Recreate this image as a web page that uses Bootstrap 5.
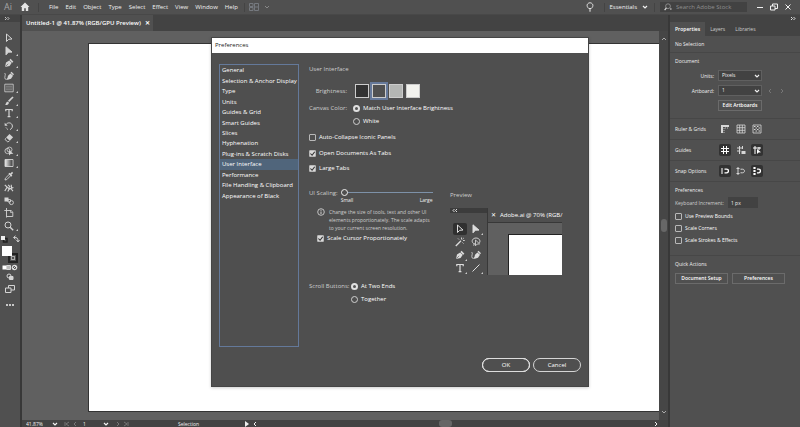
<!DOCTYPE html>
<html lang="en">
<head>
<meta charset="utf-8">
<meta name="viewport" content="width=device-width, initial-scale=1">
<title>Illustrator preferences</title>
<link href="https://cdn.jsdelivr.net/npm/bootstrap@5.3.0/dist/css/bootstrap.min.css" rel="stylesheet">
<style>
:root{--panel:#505050;--dark:#434343;--field:#424242;--canvas:#606060;--line:#474747;--edge:#383838}
body{font:6px/10px "Open Sans","Noto Sans",sans-serif;color:#f0f0f0;background:var(--panel)}
svg{display:block;fill:none;stroke:currentColor;flex:none}
a{color:inherit;text-decoration:none}
button,input,select{font:inherit;color:inherit;line-height:10px}
button{background:none;border:0;padding:0}
.dim{color:#cecece}
.i8{width:8px;height:8px}.i10{width:10px;height:10px}
.m1{margin-top:1px}.m2{margin-top:2px}.m3{margin-top:3px}.m5{margin-top:5px}.m6{margin-top:6px}.m10{margin-top:10px}.m15{margin-top:15px}
.topbar{height:15px;border-bottom:1px solid #484848}
.vline{width:1px;height:9px;background:#444}
.ai{font-size:9px;color:#a5a5a5}
.menus{gap:7px;margin:0 6px 0 10px}
.util{gap:5px}
.winbtns{gap:6px}
.stock{width:87px;height:10px;background:var(--field);color:#999}
.stock input{background:none;border:0;outline:0;padding:0;min-width:0}
.stock input::placeholder{color:#8f8f8f;opacity:1}
.tools{width:22px;border-right:2px solid var(--edge);color:#d4d4d4}
.strip{height:7px;background:var(--dark)}
.toolgrid{height:200px;margin-top:10px;display:grid;grid-auto-rows:1fr;justify-items:center;align-items:center}
.toolgrid button{position:relative;width:16px}
.toolgrid svg{width:10px;height:10px;margin-left:2px}
.more::after{content:"";position:absolute;right:0;bottom:0;border-left:2px solid transparent;border-bottom:2px solid #ccc}
.chips{width:16px;height:17px}
.fillchip,.strokechip{position:absolute;width:10px;height:10px}
.fillchip{left:0;top:0;background:#fff}
.strokechip{right:0;bottom:0;border:2px solid #222;outline:1px solid #aaa;outline-offset:-4px}
.tabstrip{height:16px;background:var(--dark)}
.doctab{background:var(--panel);font-weight:600;color:#fff;padding:0 3px 0 4px}
.stage{background:var(--canvas);padding:12px 0 8px 66px}
.artboard{background:#fff;border:1px solid #333;border-right:0}
.vscroll{width:9px;background:#464646;color:#aaa}
.vthumb{width:6px;height:13px;border-radius:3px;background:#676767;margin-top:109px}
.status{height:7px;background:var(--dark);overflow:hidden;font-size:5px}
.sbfill{flex:180 0 0}.sbrest{flex:200 0 0}
.stext{margin:0 44px 0 48px}
.hthumb{width:13px;height:7px;border-radius:3px;background:#666}
.status select{background:transparent;border:0;padding:0;appearance:none}
.props{width:132px;border-left:2px solid var(--edge);font-size:5px}
.ptabs{height:14px;background:var(--dark)}
.ptabs a{padding:2px 5px}
.ptabs .on{background:var(--panel);font-weight:600;color:#fff}
.sec{padding:3px 4px 3px 5px;border-bottom:1px solid var(--line)}
.sec.low{padding-bottom:5px}
.sec.deep{padding-bottom:10px}
.lab{width:39px;text-align:right}
.field{background:var(--field);border:1px solid #606060;height:11px;padding:0 3px;line-height:9px}
.w44{width:44px}.w30{width:30px}.w53{width:53px}
.drop{position:relative}
.drop select{appearance:none;display:block;width:100%;border-radius:0}
.drop svg{position:absolute;right:1px;top:2px;width:8px;height:8px;pointer-events:none}
.pbtn{height:11px;border:1px solid #6b6b6b;color:#fff;line-height:9px;white-space:nowrap;font-weight:600}
.prow{min-height:15px}
.irow{height:21px;border-bottom:1px solid var(--line);padding:0 5px}
.irow span{width:40px;white-space:nowrap}
.irow button{width:12px;height:12px;border-radius:2px;display:grid;place-items:center;color:#d6d6d6}
.irow .on{background:#323232;color:#fff}
.irow svg{width:10px;height:10px}
.tick{appearance:none;width:7px;height:7px;border:1px solid #b8b8b8;border-radius:1px;margin:0;flex:none}
.tick:checked{background:#d9d9d9 url("data:image/svg+xml,%3Csvg xmlns='http://www.w3.org/2000/svg' viewBox='0 0 7 7'%3E%3Cpath d='M1 3.5l2 2 3-4' fill='none' stroke='%23333' stroke-width='1.2'/%3E%3C/svg%3E") center/6px}
.dot{appearance:none;width:7px;height:7px;border:1px solid #d0d0d0;border-radius:50%;margin:0;flex:none}
.dot:checked{border:2px solid #e0e0e0;background:#555}
.dlg{width:378px;top:37px;height:350px;background:#4f4f4f;border:1px solid #454545;box-shadow:0 1px 3px #0003}
.dlgtitle{height:15px;line-height:15px;background:#fff;color:#222;padding-left:3px}
.dlgbody{padding:11px 7px 0;gap:10px}
.cats{width:80px;height:283px;border:1px solid #64799a}
.catgrid{display:grid;grid-auto-rows:1fr;height:136px}
.catgrid a{padding-left:2px;color:#fff;white-space:nowrap;display:flex;align-items:center}
.catgrid .on{background:#50657b}
.opt{color:#fff;gap:3px;height:10px;white-space:nowrap}
.lab2{width:38px;text-align:right;white-space:nowrap}
.swatch{width:14px;height:14px;border:1px solid #ccc}
.swatch.sel{outline:2px solid #66799a}
.s1{background:#323232}.s2{background:#505050}.s3{background:#b4b6b4}.s4{background:#f2f2ee}
.bgap{gap:3px}
.cgap{gap:6px}
.slide{appearance:none;display:block;width:92px;height:8px;margin:0;background:linear-gradient(#7d91a8,#7d91a8) center/100% 1px no-repeat}
.slide::-webkit-slider-thumb{appearance:none;width:7px;height:7px;border:1px solid #eee;border-radius:50%;background:#4f4f4f}
.slabel{padding-right:3px}
.tiny{font-size:5px;line-height:8px}
.scalecol{width:141px}
.pv{width:111px;height:67px;margin-top:8px}
.pvtools{width:38px;background:#4f4f4f;border-right:1px solid #383838}
.pvbar{height:5px;background:#3c3c3c;padding-left:2px}
.pvgrid{display:grid;grid-template-columns:16px 16px;grid-auto-rows:13px;padding:9px 2px 0;place-items:center;color:#ddd}
.pvgrid .on{background:#303030;border-radius:2px}
.pvgrid span{width:14px;height:12px;display:grid;place-items:center;position:relative}
.pvtab{height:15px;white-space:nowrap;border-bottom:1px solid #383838;padding-left:3px;gap:4px;color:#fff}
.pvcanvas{background:var(--canvas);padding:11px 0 0 20px}
.pvpage{background:#fff;border:1px solid #222;border-width:1px 0 0 1px}
.pill{width:48px;height:14px;border:1px solid #d5d5d5;border-radius:7px;line-height:12px;color:#fff}
.pill.main{outline:1px solid #ddd;outline-offset:-1px;border-color:#fff}
.dlgfoot{gap:3px;padding:0 7px 14px}
</style>
<script src="https://cdn.jsdelivr.net/npm/bootstrap@5.3.0/dist/js/bootstrap.bundle.min.js"></script>
</head>
<body class="vh-100 d-flex flex-column overflow-hidden">
<svg width="0" height="0" class="position-absolute" aria-hidden="true">
<symbol id="sel" viewBox="0 0 10 10"><path d="M2.5 1v7.5l2.2-2.2 3.3-.3z"/></symbol>
<symbol id="dir" viewBox="0 0 10 10"><path d="M2 .8v8l2.4-2.6 3.6-.1z" fill="currentColor"/></symbol>
<symbol id="pen" viewBox="0 0 10 10"><path d="M1 9l1-4.6 3.2-2 2.5 2.4-2.1 3.3z" fill="currentColor" stroke="none"/><path d="M6 1.400l2.800 2.800" stroke-width="1.600"/><path d="M1.400 8.600l2.800-2.800" stroke="#505050" stroke-width=".6"/></symbol>
<symbol id="curv" viewBox="0 0 10 10"><path d="M3 9l1-4.200 2.400-2.300 2.600 2.200-2 3z" fill="currentColor" stroke="none"/><path d="M7 1.200l2.500 2.600" stroke-width="1.400"/><path d="M.6 2c2 1-.8 4 .6 6 1 1 2 .2 2.600-1" stroke-width=".8"/></symbol>
<symbol id="rect" viewBox="0 0 10 10"><path d="M.8 1.200h8.400v7.600H.8z" stroke-width=".8"/><path d="M2.500 3.200h5M2.500 5h5M2.500 6.800h5" stroke-dasharray="1 1" stroke-width=".9"/></symbol>
<symbol id="brush" viewBox="0 0 10 10"><path d="M9 1L4.600 5.400" stroke-width="1.700"/><path d="M1 9c1-.3.600-2.200 2-3.200 1.400-.4 2.300.7 1.600 2C4 9 2.500 9.300 1 9z" fill="currentColor" stroke="none"/></symbol>
<symbol id="type" viewBox="0 0 10 10"><path d="M1.800 3.200V1.500h6.400v1.700M5 1.500v7M3.600 8.700h2.800" stroke-width="1.200"/></symbol>
<symbol id="rot" viewBox="0 0 10 10"><path d="M2 3.600C3.400 1 8 1.200 8.400 5c0 1.800-1 3-2.400 3.600"/><path d="M.7 1.800v3h3z" fill="currentColor" stroke="none"/><path d="M2 6.500c.5 1.200 1.500 2 2.700 2.200" stroke-dasharray="1 .8"/></symbol>
<symbol id="erase" viewBox="0 0 10 10"><path d="M5.500 1l3.600 3.200-3.300 3.600-3.700-3.200z" fill="currentColor" stroke="none"/><path d="M1.800 5.200L1 6.500l2.800 2.400 1.500-.8" stroke-width=".9"/></symbol>
<symbol id="shape" viewBox="0 0 10 10"><circle cx="3.500" cy="5" r="2.600" stroke-width=".8"/><circle cx="5.500" cy="3.600" r="2.500" stroke-width=".8"/><path d="M5 4v5.500l1.600-1.500 2.800-.3z" fill="currentColor" stroke="none"/></symbol>
<symbol id="grad" viewBox="0 0 10 10"><linearGradient id="lg"><stop stop-color="#eee"/><stop offset="1" stop-color="#333"/></linearGradient><path d="M1 1.500h8v7H1z" fill="url(#lg)" stroke-width=".9"/></symbol>
<symbol id="drop" viewBox="0 0 10 10"><path d="M1 9l.4-1.800L5.600 3l1.400 1.400-4.200 4.200z" stroke-width=".9"/><path d="M5 2.300l2.800 2.800M6.800 3.200L8.600 1.400" stroke-width="1.600"/></symbol>
<symbol id="puppet" viewBox="0 0 10 10"><path d="M.8 2l2.400 2L.8 8M3.200 4.200l2.400 1.600L9.400 4.500M4.200 1.800l2 2.400M5 6.200L3.800 8.600M6.800 5.500l2.200 2.700M7.200 1.800l.4 3" stroke-width="1.100"/><circle cx="5.400" cy="5.400" r="1" fill="currentColor" stroke="none"/></symbol>
<symbol id="blend" viewBox="0 0 10 10"><path d="M.5 1.500h4v4h-4z" fill="currentColor" stroke="none"/><path d="M4 3.500h2.500V6H4z" stroke-width=".8"/><circle cx="7.400" cy="6.600" r="2" stroke-width=".9"/></symbol>
<symbol id="board" viewBox="0 0 10 10"><path d="M2.500 0v9.500M.3 2.500H7l1.800 1.600v4.400H2.500" stroke-width=".9"/><path d="M6.500 2.500v2h2" stroke-width=".7"/></symbol>
<symbol id="zoom" viewBox="0 0 10 10"><circle cx="4" cy="4" r="3"/><path d="M6.200 6.200l3 3" stroke-width="1.400"/></symbol>
<symbol id="wand" viewBox="0 0 10 10"><path d="M.8 9L6 3.800" stroke-width="1.300"/><path d="M6.500.5v2M8 3.500h1.800M3 1.500l1 1M8.800 1L7.600 2.200M7.500 5.500l1 1" stroke-width=".9"/></symbol>
<symbol id="lasso" viewBox="0 0 10 10"><path d="M2.500 6.500C-.4 4 2 1 5 1s4.800 2.500 3.500 4.800M2.500 6.500c1.500-.5 2 .8.800 1.500L2 8" stroke-width=".9"/><path d="M4.500 3v5.800l1.600-1.700 2.500-.2z" stroke-width=".8"/></symbol>
<symbol id="lineic" viewBox="0 0 10 10"><path d="M1.500 8.500l7-7"/></symbol>
<symbol id="chev" viewBox="0 0 8 8"><path d="M2 3l2 2 2-2" stroke-width="1.200"/></symbol>
<symbol id="dchev" viewBox="0 0 6 5"><path d="M1 1l1.500 1.500L1 4M3.500 1L5 2.500 3.500 4" stroke-width=".9"/></symbol>
<symbol id="dchevl" viewBox="0 0 6 5"><path d="M2.500 1L1 2.500 2.500 4M5 1L3.500 2.500 5 4" stroke-width=".9"/></symbol>
</svg>

<header class="topbar d-flex align-items-center flex-shrink-0 px-1">
  <span class="ai">Ai</span>
  <a href="#" aria-label="Home" class="ms-2"><svg class="i10" viewBox="0 0 10 10"><path d="M5 .5L.5 5h1.300v4h2.400V6.200h1.600V9h2.400V5h1.300z" fill="#e4e4e4" stroke="none"/></svg></a>
  <span class="vline ms-2"></span>
  <nav class="d-flex menus" aria-label="Main menu"><a href="#">File</a><a href="#">Edit</a><a href="#">Object</a><a href="#">Type</a><a href="#">Select</a><a href="#">Effect</a><a href="#">View</a><a href="#">Window</a><a href="#">Help</a></nav>
  <span class="vline me-1"></span>
  <svg class="i10" viewBox="0 0 10 10"><path d="M.5 1.500h3.500v3H.5zM.5 5.500h3.500v3H.5zM5.500 1.500h4v7h-4zM5.500 5h4" stroke="#75797f"/></svg>
  <svg class="i8 ms-1" viewBox="0 0 8 8"><path d="M2 3l2 2 2-2" stroke="#888"/></svg>
  <div class="ms-auto d-flex align-items-center util">
    <svg class="i10" viewBox="0 0 10 10"><path d="M3.800 6.500C.6 3.800 2.500.8 5 .8s4.400 3 1.200 5.700zM4 8h2M4.500 9.300h1" stroke-width=".9"/></svg>
    <span class="vline ms-1"></span>
    <button type="button" class="d-flex align-items-center gap-1">Essentials <svg class="i8"><use href="#chev"/></svg></button>
    <span class="vline"></span>
    <label class="stock d-flex align-items-center ps-1"><svg class="i8 me-1" viewBox="0 0 10 10" stroke="#ddd"><circle cx="5" cy="4" r="3"/><path d="M3 6L.8 9M7.500 7.500h2" stroke-width="1.400" stroke="#ddd"/></svg><input class="w-100" type="search" placeholder="Search Adobe Stock" aria-label="Search Adobe Stock"></label>
    <div class="d-flex winbtns px-1">
    <button type="button" aria-label="Minimize"><svg class="i8" viewBox="0 0 8 8"><path d="M1 4.500h6"/></svg></button>
    <button type="button" aria-label="Restore"><svg class="i8" viewBox="0 0 8 8"><path d="M.5 3h4.500v4H.5zM2.500 3V1h5v4.500H5"/></svg></button>
    <button type="button" aria-label="Close"><svg class="i8" viewBox="0 0 8 8"><path d="M1.500 1.500l5 5M6.500 1.500l-5 5"/></svg></button></div>
  </div>
</header>

<div class="d-flex flex-grow-1 overflow-hidden">
  <aside class="tools d-flex flex-column align-items-center flex-shrink-0" aria-label="Tools">
    <div class="strip w-100 ps-1 d-flex align-items-center"><svg width="6" height="5"><use href="#dchev"/></svg></div>
    <div class="toolgrid">
      <button type="button" aria-label="Selection"><svg><use href="#sel"/></svg></button>
      <button type="button" class="more" aria-label="Direct selection"><svg><use href="#dir"/></svg></button>
      <button type="button" class="more" aria-label="Pen"><svg><use href="#pen"/></svg></button>
      <button type="button" aria-label="Curvature"><svg><use href="#curv"/></svg></button>
      <button type="button" class="more" aria-label="Rectangle"><svg><use href="#rect"/></svg></button>
      <button type="button" class="more" aria-label="Paintbrush"><svg><use href="#brush"/></svg></button>
      <button type="button" class="more" aria-label="Type"><svg><use href="#type"/></svg></button>
      <button type="button" class="more" aria-label="Rotate"><svg><use href="#rot"/></svg></button>
      <button type="button" class="more" aria-label="Eraser"><svg><use href="#erase"/></svg></button>
      <button type="button" class="more" aria-label="Shape builder"><svg><use href="#shape"/></svg></button>
      <button type="button" class="more" aria-label="Gradient"><svg><use href="#grad"/></svg></button>
      <button type="button" aria-label="Eyedropper"><svg><use href="#drop"/></svg></button>
      <button type="button" aria-label="Puppet warp"><svg><use href="#puppet"/></svg></button>
      <button type="button" aria-label="Blend"><svg><use href="#blend"/></svg></button>
      <button type="button" aria-label="Artboard"><svg><use href="#board"/></svg></button>
      <button type="button" class="more" aria-label="Zoom"><svg><use href="#zoom"/></svg></button>
    </div>
    <div class="d-flex gap-1 m3"><svg class="i8" viewBox="0 0 8 8"><path d="M3.500 3.500h3.500v3.500H3.500z" stroke="#222" stroke-width="1.500"/><path d="M1 1h4v4H1z" fill="#eee" stroke="none"/></svg><svg class="i8" viewBox="0 0 8 8"><path d="M2 2.500c3-.5 4 1 4 3.500M3.500.8L1.500 2.500l2 1.700M4.500 5L6 7l1.500-2"/></svg></div>
    <div class="chips position-relative m3"><span class="strokechip"></span><span class="fillchip"></span></div>
    <svg class="m1" width="16" height="7" viewBox="0 0 16 7"><path d="M.5 1.500h3.500v4H.5z" fill="#fff" stroke="none"/><path d="M4.500 1.500h4v4h-4z" fill="#bbb" stroke="#eee" stroke-width=".8"/><circle cx="12.500" cy="3.500" r="2.200" stroke="#ddd" stroke-width="1.200"/><path d="M11 5l3-3" stroke="#ddd"/></svg>
    <svg class="i8 m2" viewBox="0 0 8 8"><circle cx="3" cy="3" r="2"/><path d="M3.500 3.500h3.500v3h-3.500z" fill="currentColor"/></svg>
    <svg class="i10 m3" viewBox="0 0 10 10"><path d="M3.500 1.500h6v4.500h-6z"/><path d="M.5 4h5.500v4.500H.5z" fill="#505050"/></svg>
    <svg class="m6" width="10" height="10" viewBox="0 0 10 10"><path d="M1 5h2M4 5h2M7 5h2" stroke="#eee" stroke-width="1.600"/></svg>
  </aside>

  <main class="d-flex flex-column flex-grow-1 overflow-hidden">
    <div class="tabstrip d-flex"><div class="doctab d-flex align-items-center gap-1 text-nowrap">Untitled-1 @ 41.87% (RGB/GPU Preview) <button type="button" aria-label="Close tab">✕</button></div></div>
    <div class="d-flex flex-grow-1">
      <div class="stage flex-grow-1 d-flex"><div class="artboard flex-grow-1"></div></div>
      <div class="vscroll d-flex flex-column align-items-center py-1"><svg class="i8" viewBox="0 0 8 8"><path d="M2 5l2-2 2 2"/></svg><span class="vthumb mt-auto"></span><svg class="i8 mt-auto" viewBox="0 0 8 8"><path d="M2 3l2 2 2-2"/></svg></div>
    </div>
    <div class="status d-flex align-items-center flex-shrink-0 ps-1">
      <select aria-label="Zoom level"><option>41.87%</option></select><svg class="i8 ms-2"><use href="#chev"/></svg>
      <svg class="i8 ms-1" viewBox="0 0 8 8"><path d="M2 2v4M6 2L3 4l3 2" stroke="#777"/></svg><svg class="i8" viewBox="0 0 8 8"><path d="M5 2L3 4l2 2" stroke="#777"/></svg>
      <select aria-label="Artboard number" class="ms-1"><option>1</option></select><svg class="i8 ms-3"><use href="#chev"/></svg>
      <svg class="i8 ms-1" viewBox="0 0 8 8"><path d="M3 2l2 2-2 2" stroke="#777"/></svg><svg class="i8" viewBox="0 0 8 8"><path d="M6 2v4M2 2l3 2-3 2" stroke="#777"/></svg>
      <span class="stext">Selection</span>
      <svg class="i8" viewBox="0 0 8 8"><path d="M2 1l4 3-4 3z" fill="#eee" stroke="none"/></svg><svg class="i8" viewBox="0 0 8 8"><path d="M5 2L3 4l2 2"/></svg>
      <span class="sbfill"></span><span class="hthumb"></span><span class="sbrest"></span><svg class="i8 me-2" viewBox="0 0 8 8"><path d="M3 2l2 2-2 2"/></svg>
    </div>
  </main>

  <aside class="props flex-shrink-0">
    <div class="strip d-flex justify-content-end align-items-center pe-1"><svg width="6" height="5"><use href="#dchev"/></svg></div>
    <nav class="ptabs d-flex" aria-label="Panels"><a href="#" class="on">Properties</a><a href="#" class="dim">Layers</a><a href="#" class="dim">Libraries</a></nav>
    <div class="sec">No Selection</div>
    <div class="sec low">
      <div>Document</div>
      <div class="prow d-flex align-items-center gap-1 m2"><label class="lab" for="units">Units:</label><div class="drop w44"><select id="units" class="field"><option>Pixels</option></select><svg><use href="#chev"/></svg></div></div>
      <div class="prow d-flex align-items-center gap-1"><label class="lab" for="ab">Artboard:</label><div class="drop w44"><select id="ab" class="field"><option>1</option></select><svg><use href="#chev"/></svg></div><svg class="i8" viewBox="0 0 8 8"><path d="M5 2L3 4l2 2" stroke="#777"/></svg><svg class="i8" viewBox="0 0 8 8"><path d="M3 2l2 2-2 2" stroke="#777"/></svg></div>
      <div class="prow d-flex align-items-center gap-1"><span class="lab"></span><button type="button" class="pbtn w44">Edit Artboards</button></div>
    </div>
    <div class="irow d-flex align-items-center gap-1"><span>Ruler &amp; Grids</span>
      <button type="button" aria-label="Rulers"><svg viewBox="0 0 10 10"><path d="M2 9V2h7" stroke-width="2"/><path d="M4 9V4h5" stroke-dasharray="1 1" stroke-width=".8"/></svg></button>
      <button type="button" aria-label="Grid"><svg viewBox="0 0 10 10"><path d="M1 1h8v8H1zM1 3.700h8M1 6.300h8M3.700 1v8M6.300 1v8" stroke-width=".8"/></svg></button>
      <button type="button" aria-label="Transparency grid"><svg viewBox="0 0 10 10"><path d="M1 1h8v8H1z" stroke-width=".8"/><path d="M2 2.500h6M2 5.500h6" stroke-width="1.200" stroke-dasharray="1.500 1.500"/><path d="M3.500 4h5M3.500 7h5" stroke-width="1.200" stroke-dasharray="1.500 1.500"/></svg></button></div>
    <div class="irow d-flex align-items-center gap-1"><span>Guides</span>
      <button type="button" class="on" aria-label="Show guides"><svg viewBox="0 0 10 10"><path d="M3.500 1v8M6.500 1v8M1 3.500h8M1 6.500h8"/></svg></button>
      <button type="button" aria-label="Lock guides"><svg viewBox="0 0 10 10"><path d="M3.500 1v8M1 3h6M1 6h3.500M6.500 1v3"/><path d="M5.500 6h4v3h-4z" fill="currentColor" stroke="none"/></svg></button>
      <button type="button" class="on" aria-label="Smart guides"><svg viewBox="0 0 10 10"><path d="M3 1v8M1 3h8M7 2v3"/><path d="M5 4v5l1.600-1.500L9 7.300z" fill="currentColor" stroke="none"/></svg></button></div>
    <div class="irow d-flex align-items-center gap-1"><span>Snap Options</span>
      <button type="button" class="on" aria-label="Snap to point"><svg viewBox="0 0 10 10"><path d="M2 2v6"/><path d="M4.500 3.200h2c2.600 0 2.600 3.600 0 3.600h-2" stroke-width="1.300"/></svg></button>
      <button type="button" aria-label="Snap to grid"><svg viewBox="0 0 10 10"><path d="M2 1v8M.5 2.500h3M.5 7.500h3"/><path d="M4.500 3.200h2c2.600 0 2.600 3.600 0 3.600h-2"/></svg></button>
      <button type="button" class="on" aria-label="Snap to pixel"><svg viewBox="0 0 10 10"><path d="M2.500 1v8" stroke-width="2.200" stroke-dasharray="2 1"/><path d="M5 3.200h1.500c2.600 0 2.600 3.600 0 3.600H5" stroke-width="1.300"/></svg></button></div>
    <div class="sec deep">
      <div>Preferences</div>
      <div class="prow d-flex align-items-center gap-1"><label for="ki" class="text-nowrap dim">Keyboard Increment:</label><input id="ki" class="field w30 border-0" value="1 px"></div>
      <label class="opt d-flex align-items-center m1"><input class="tick" type="checkbox">Use Preview Bounds</label>
      <label class="opt d-flex align-items-center m2"><input class="tick" type="checkbox">Scale Corners</label>
      <label class="opt d-flex align-items-center m2"><input class="tick" type="checkbox">Scale Strokes &amp; Effects</label>
    </div>
    <div class="sec border-0">
      <div class="mb-1">Quick Actions</div>
      <div class="d-flex gap-1"><button type="button" class="pbtn w53">Document Setup</button><button type="button" class="pbtn w53">Preferences</button></div>
    </div>
  </aside>
</div>

<section class="dlg position-absolute start-50 translate-middle-x d-flex flex-column" role="dialog" aria-labelledby="dt">
  <div id="dt" class="dlgtitle">Preferences</div>
  <div class="dlgbody d-flex flex-grow-1">
    <nav class="cats flex-shrink-0" aria-label="Categories"><div class="catgrid"><a href="#">General</a><a href="#">Selection &amp; Anchor Display</a><a href="#">Type</a><a href="#">Units</a><a href="#">Guides &amp; Grid</a><a href="#">Smart Guides</a><a href="#">Slices</a><a href="#">Hyphenation</a><a href="#">Plug-ins &amp; Scratch Disks</a><a href="#" class="on">User Interface</a><a href="#">Performance</a><a href="#">File Handling &amp; Clipboard</a><a href="#">Appearance of Black</a></div></nav>
    <div class="flex-grow-1">
      <div class="dim">User Interface</div>
      <div class="d-flex align-items-center m10"><span class="lab2 dim me-2">Brightness:</span><div class="d-flex bgap"><button type="button" class="swatch s1" aria-label="Dark"></button><button type="button" class="swatch s2 sel" aria-label="Medium dark"></button><button type="button" class="swatch s3" aria-label="Medium light"></button><button type="button" class="swatch s4" aria-label="Light"></button></div></div>
      <div class="d-flex cgap m5"><span class="lab2 dim">Canvas Color:</span><div><label class="opt d-flex align-items-center"><input class="dot" type="radio" name="cc" checked>Match User Interface Brightness</label><label class="opt d-flex align-items-center m3"><input class="dot" type="radio" name="cc">White</label></div></div>
      <label class="opt d-flex align-items-center m6"><input class="tick" type="checkbox">Auto-Collapse Iconic Panels</label>
      <label class="opt d-flex align-items-center m6"><input class="tick" type="checkbox" checked>Open Documents As Tabs</label>
      <label class="opt d-flex align-items-center m5"><input class="tick" type="checkbox" checked>Large Tabs</label>
      <div class="d-flex m15">
        <div class="scalecol">
          <div class="d-flex"><label class="dim text-nowrap slabel" for="sc">UI Scaling:</label><div><input id="sc" class="slide" type="range" min="0" max="100" value="0"><div class="tiny d-flex justify-content-between"><span>Small</span><span>Large</span></div></div></div>
          <div class="d-flex ps-2 gap-1 mt-1 tiny dim"><svg class="i8" viewBox="0 0 8 8"><circle cx="4" cy="4" r="3.300" stroke-width=".9"/><path d="M4 3.500v2.500M4 1.800v1"/></svg><div class="text-nowrap">Change the size of tools, text and other UI<br>elements proportionately. The scale adapts<br>to your current screen resolution.</div></div>
          <label class="opt d-flex align-items-center ps-2 m1"><input class="tick" type="checkbox" checked>Scale Cursor Proportionately</label>
        </div>
        <div><div class="dim m2">Preview</div>
          <div class="pv d-flex">
            <div class="pvtools flex-shrink-0"><div class="pvbar"><svg width="6" height="5"><use href="#dchevl"/></svg></div><div class="pvgrid"><span class="on"><svg class="i10"><use href="#sel"/></svg></span><span class="more"><svg class="i10"><use href="#dir"/></svg></span><span><svg class="i10"><use href="#wand"/></svg></span><span><svg class="i10"><use href="#lasso"/></svg></span><span class="more"><svg class="i10"><use href="#pen"/></svg></span><span><svg class="i10"><use href="#curv"/></svg></span><span class="more"><svg class="i10"><use href="#type"/></svg></span><span class="more"><svg class="i10"><use href="#lineic"/></svg></span></div></div>
            <div class="flex-grow-1 d-flex flex-column"><div class="pvtab d-flex align-items-center"><span>✕</span><span>Adobe.ai @ 70% (RGB/</span></div><div class="pvcanvas flex-grow-1 d-flex"><div class="pvpage flex-grow-1"></div></div></div>
          </div>
        </div>
      </div>
      <div class="d-flex m6"><span class="lab2 dim me-1">Scroll Buttons:</span><div><label class="opt d-flex align-items-center"><input class="dot" type="radio" name="sb" checked>At Two Ends</label><label class="opt d-flex align-items-center m3"><input class="dot" type="radio" name="sb">Together</label></div></div>
    </div>
  </div>
  <div class="dlgfoot d-flex justify-content-end"><button type="button" class="pill main">OK</button><button type="button" class="pill">Cancel</button></div>
</section>
</body>
</html>
